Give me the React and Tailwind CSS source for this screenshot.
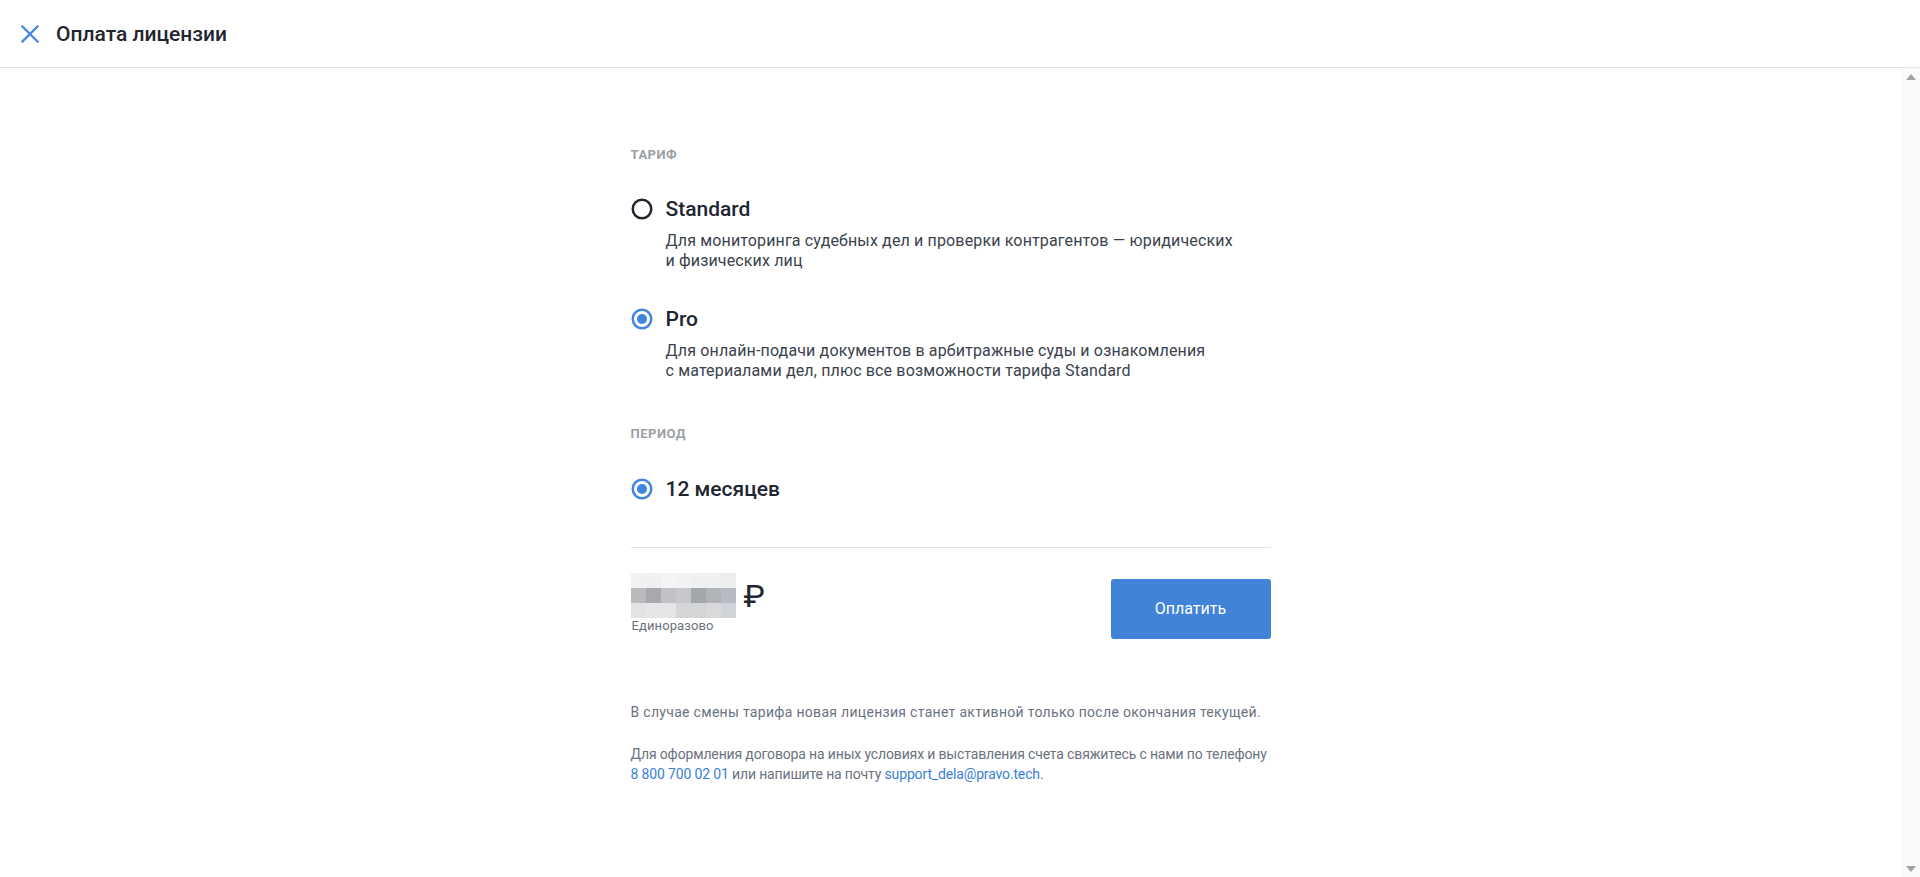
import React from "react";

function Radio({ checked }) {
  return (
    <svg width="22" height="22" viewBox="0 0 22 22" className="shrink-0">
      {checked ? (
        <>
          <circle cx="11" cy="11" r="9.25" fill="none" stroke="#3f85dc" strokeWidth="2.5" />
          <circle cx="11" cy="11" r="5" fill="#3f85dc" />
        </>
      ) : (
        <circle cx="11" cy="11" r="9.25" fill="none" stroke="#1f2630" strokeWidth="2.5" />
      )}
    </svg>
  );
}

function Option({ checked, title, children, className }) {
  return (
    <div className={className}>
      <div className="flex items-center gap-[13px] h-6">
        <Radio checked={checked} />
        <span className="text-[21px] leading-6 font-medium text-[#1f2630]">{title}</span>
      </div>
      {children ? (
        <p className="pl-[35px] mt-[10px] text-[16px] leading-5 tracking-[0.15px] text-[#3a424d]">{children}</p>
      ) : null}
    </div>
  );
}

const tiles = [
  "bg-[#f0f1f2]", "bg-[#eff0f1]", "bg-[#f3f4f5]", "bg-[#f1f2f3]", "bg-[#eef0f1]", "bg-[#eff0f1]", "bg-[#eceef0]",
  "bg-[#b9babc]", "bg-[#a7a9ad]", "bg-[#c0c2c5]", "bg-[#c6c8ca]", "bg-[#a3a6ab]", "bg-[#b1b3b5]", "bg-[#b6bbc2]",
  "bg-[#e2e3e4]", "bg-[#e5e6e7]", "bg-[#e4e5e6]", "bg-[#d5d6d8]", "bg-[#d3d5d7]", "bg-[#d8d9db]", "bg-[#d0d3d7]",
];

export default function App() {
  return (
    <div className="h-[877px] w-full flex flex-col bg-white overflow-hidden font-['Roboto',sans-serif]">
      <header className="h-[68px] shrink-0 flex items-center border-b border-[#e1e3e6] pl-[21px]">
        <svg width="18" height="18" viewBox="0 0 18 18" className="shrink-0">
          <path d="M1.5 1.5 16.5 16.5 M16.5 1.5 1.5 16.5" stroke="#4a89dc" strokeWidth="2.3" strokeLinecap="square" fill="none" />
        </svg>
        <h1 className="ml-[17px] text-[21px] leading-6 font-medium text-[#1f2630]">Оплата лицензии</h1>
      </header>

      <div className="flex flex-1 min-h-0">
        <main className="flex-1 flex justify-center">
          <div className="w-[640px] pt-[79px]">
            <div className="text-[13px] leading-4 font-bold tracking-[0.5px] text-[#9aa0a6]">ТАРИФ</div>

            <Option className="mt-[34px]" title="Standard">
              Для мониторинга судебных дел и проверки контрагентов — юридических
              <br />и физических лиц
            </Option>

            <Option className="mt-[36px]" checked title="Pro">
              Для онлайн-подачи документов в арбитражные суды и ознакомления
              <br />с материалами дел, плюс все возможности тарифа Standard
            </Option>

            <div className="mt-[45px] text-[13px] leading-4 font-bold tracking-[0.5px] text-[#9aa0a6]">ПЕРИОД</div>

            <Option className="mt-[35px]" checked title="12 месяцев" />

            <div className="mt-[46px] h-px bg-[#e0e2e5]" />

            <div className="mt-[25px] flex justify-between items-start">
              <div className="flex flex-col">
                <div className="flex items-center h-[45px]">
                  <div className="grid grid-cols-7 w-[105px] h-[45px]">
                    {tiles.map((c, i) => (
                      <div key={i} className={c} />
                    ))}
                  </div>
                  <span className="ml-[8px] text-[32px] leading-none text-[#1f2630]">₽</span>
                </div>
                <span className="text-[13px] leading-4 tracking-[0.1px] text-[#6b7280] pl-[1px]">Единоразово</span>
              </div>
              <button className="mt-[6px] w-[160px] h-[60px] rounded-[3px] bg-[#4183d7] text-white text-[16px] leading-5">
                Оплатить
              </button>
            </div>

            <div className="mt-[63px] text-[14px] leading-5 text-[#6b7280]">
              <p className="whitespace-nowrap tracking-[0.3px]">
                В случае смены тарифа новая лицензия станет активной только после окончания текущей.
              </p>
              <p className="mt-[22px] tracking-[-0.15px]">
                <span className="whitespace-nowrap">
                  Для оформления договора на иных условиях и выставления счета свяжитесь с нами по телефону
                </span>
                <br />
                <span className="text-[#3b7fd4]">8 800 700 02 01</span> или напишите на почту{" "}
                <span className="text-[#3b7fd4]">support_dela@pravo.tech</span>.
              </p>
            </div>
          </div>
        </main>

        <div className="w-[19px] shrink-0 bg-[#fafafa] flex flex-col justify-between items-center">
          <div className="h-[17px] flex items-center justify-center">
            <svg width="10" height="6" viewBox="0 0 10 6">
              <path d="M0 6 5 0 10 6Z" fill="#a3a3a3" />
            </svg>
          </div>
          <div className="h-[17px] flex items-center justify-center">
            <svg width="10" height="6" viewBox="0 0 10 6">
              <path d="M0 0 10 0 5 6Z" fill="#a3a3a3" />
            </svg>
          </div>
        </div>
      </div>
    </div>
  );
}
